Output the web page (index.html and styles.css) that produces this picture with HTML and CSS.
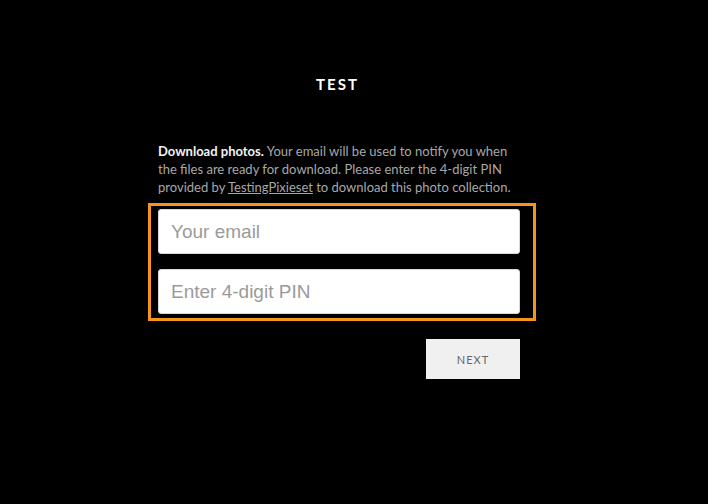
FILE: index.html
```html
<!DOCTYPE html>
<html lang="en">
<head>
  <meta charset="UTF-8">
  <title>Test - Download photos</title>
  <link rel="stylesheet" href="styles.css">
</head>
<body>
  <div class="page">
    <h1 class="title">TEST</h1>

    <p class="intro">
      <strong>Download photos.</strong> Your email will be used to notify you when
      the files are ready for download. Please enter the 4-digit PIN
      provided by <a href="#">TestingPixieset</a> to download this photo collection.
    </p>

    <div class="fields">
      <input type="email" class="field" placeholder="Your email">
      <input type="text" class="field" placeholder="Enter 4-digit PIN">
    </div>

    <div class="actions">
      <button class="next">NEXT</button>
    </div>
  </div>
</body>
</html>
```

FILE: styles.css
```css
html, body {
  background: #000;
}
body {
  margin: 0;
  padding-right: 30px;
  font-family: Lato, "Open Sans", sans-serif;
}
.page {
  width: 362px;
  margin: 0 auto;
  padding-top: 74px;
}
.title {
  margin: 0 0 0 -3px;
  text-align: center;
  color: #fff;
  font-size: 15px;
  font-weight: 700;
  letter-spacing: 2px;
  line-height: 20px;
}
.intro {
  margin: 48px 0 0;
  color: #a8a8a8;
  font-size: 13px;
  line-height: 18px;
}
.intro strong {
  color: #f2f2f2;
}
.intro a {
  color: #a8a8a8;
  text-decoration: underline;
}
.fields {
  display: flex;
  flex-direction: column;
  gap: 15px;
  margin: 7px -16px 0 -10px;
  padding: 3px 13px 4px 7px;
  border: 3px solid #f7941d;
}
.field {
  box-sizing: border-box;
  width: 100%;
  height: 45px;
  margin: 0;
  padding: 0 12px;
  border: 1px solid #d8d8d8;
  border-radius: 3px;
  background: #fff;
  font-family: "Liberation Sans", Arial, sans-serif;
  font-size: 19px;
  color: #333;
}
.field::placeholder {
  color: #9a9a9a;
}
.actions {
  display: flex;
  justify-content: flex-end;
  margin-top: 18px;
}
.next {
  width: 94px;
  height: 40px;
  border: none;
  background: #f0f0f0;
  color: #666;
  font-family: Lato, sans-serif;
  font-size: 11px;
  letter-spacing: 1px;
  cursor: pointer;
}
```
